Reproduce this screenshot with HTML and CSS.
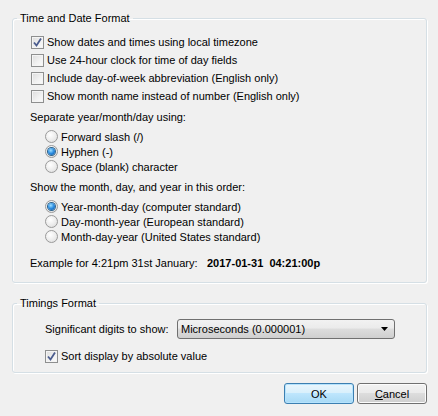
FILE: index.html
```html
<!DOCTYPE html>
<html>
<head>
<meta charset="utf-8">
<link rel="stylesheet" href="styles.css">
</head>
<body>
<div class="dialog">
  <fieldset class="group group-date">
    <legend class="legend">Time and Date Format</legend>
    <div class="checks">
      <div class="check-row"><span class="cb checked"><svg viewBox="0 0 11 11" width="11" height="11"><path d="M2 5.5 L4.5 8.5 L9 1.5" fill="none" stroke="#4b5c8e" stroke-width="1.8"/></svg></span><span class="lbl">Show dates and times using local timezone</span></div>
      <div class="check-row"><span class="cb"></span><span class="lbl">Use 24-hour clock for time of day fields</span></div>
      <div class="check-row"><span class="cb"></span><span class="lbl">Include day-of-week abbreviation (English only)</span></div>
      <div class="check-row"><span class="cb"></span><span class="lbl">Show month name instead of number (English only)</span></div>
    </div>
    <div class="caption cap-sep">Separate year/month/day using:</div>
    <div class="radios">
      <div class="radio-row"><span class="rb"></span><span class="lbl">Forward slash (/)</span></div>
      <div class="radio-row"><span class="rb on"></span><span class="lbl">Hyphen (-)</span></div>
      <div class="radio-row"><span class="rb"></span><span class="lbl">Space (blank) character</span></div>
    </div>
    <div class="caption cap-order">Show the month, day, and year in this order:</div>
    <div class="radios">
      <div class="radio-row"><span class="rb on"></span><span class="lbl">Year-month-day (computer standard)</span></div>
      <div class="radio-row"><span class="rb"></span><span class="lbl">Day-month-year (European standard)</span></div>
      <div class="radio-row"><span class="rb"></span><span class="lbl">Month-day-year (United States standard)</span></div>
    </div>
    <div class="example"><span class="ex-label">Example for 4:21pm 31st January:</span><span class="ex-value">2017-01-31&nbsp; 04:21:00p</span></div>
  </fieldset>

  <fieldset class="group group-timing">
    <legend class="legend">Timings Format</legend>
    <div class="digits-row">
      <span class="digits-label">Significant digits to show:</span>
      <div class="select"><span class="select-text">Microseconds (0.000001)</span><svg class="arrow" width="7" height="4" viewBox="0 0 7 4"><path d="M0 0 H7 L3.5 4 Z" fill="#000"/></svg></div>
    </div>
    <div class="check-row sort-row"><span class="cb checked"><svg viewBox="0 0 11 11" width="11" height="11"><path d="M2 5.5 L4.5 8.5 L9 1.5" fill="none" stroke="#4b5c8e" stroke-width="1.8"/></svg></span><span class="lbl">Sort display by absolute value</span></div>
  </fieldset>

  <div class="buttons">
    <button class="btn btn-ok">OK</button>
    <button class="btn btn-cancel"><u>C</u>ancel</button>
  </div>
</div>
</body>
</html>
```

FILE: styles.css
```css
* { box-sizing: border-box; }
html, body {
  margin: 0;
  padding: 0;
  background: #f0f0f0;
  width: 438px;
  height: 416px;
  overflow: hidden;
}
body {
  font-family: "Liberation Sans", Arial, sans-serif;
  font-size: 11px;
  color: #000;
}
.dialog {
  padding: 11px 11px 0 12px;
}
.group {
  margin: 0;
  padding: 0;
  width: 415px;
  border: 1px solid #d5dfe5;
  border-radius: 3px;
  box-shadow: inset 1px 1px 0 #fff, 1px 1px 0 #fff;
  min-width: 0;
}
.legend {
  margin-left: 4px;
  padding: 0 3px;
  height: 14px;
  line-height: 14px;
}
.group-date {
  padding: 0 0 12px 0;
}
.checks {
  padding-top: 8px;
  padding-left: 18px;
}
.check-row {
  display: flex;
  align-items: center;
  height: 18px;
}
.cb {
  width: 13px;
  height: 13px;
  border: 1px solid #8e8f8f;
  background: linear-gradient(135deg, #dcdcdc 0%, #f2f2f2 60%, #fbfbfb 100%);
  box-shadow: inset 0 0 0 1px #f4f4f4;
  display: flex;
  align-items: center;
  justify-content: center;
  flex: none;
  margin-right: 3px;
}
.cb svg { display: block; }
.caption {
  height: 14px;
  line-height: 14px;
  padding-left: 17px;
}
.cap-sep { margin-top: 5px; }
.cap-order { margin-top: 6px; }
.radios {
  padding-left: 32px;
  margin-top: 5px;
}
.radio-row {
  display: flex;
  align-items: center;
  height: 15px;
}
.rb {
  width: 13px;
  height: 13px;
  border-radius: 50%;
  border: 1px solid #9a9a9a;
  background: radial-gradient(circle at 40% 35%, #ffffff 0%, #ececec 55%, #d6d6d6 100%);
  flex: none;
  margin-right: 3px;
  display: flex;
  align-items: center;
  justify-content: center;
}
.rb.on::after {
  content: "";
  width: 7px;
  height: 7px;
  border-radius: 50%;
  background: radial-gradient(circle at 40% 35%, #9fe0ff 0%, #2a8be0 50%, #0b4f94 100%);
  box-shadow: 0 0 0 1px #2c628b;
}
.example {
  margin-top: 12px;
  padding-left: 17px;
  height: 14px;
  line-height: 14px;
  display: flex;
}
.ex-label { width: 177px; }
.ex-value { font-weight: bold; }

.group-timing {
  margin-top: 13px;
  padding: 0 0 7px 0;
}
.digits-row {
  margin-top: 9px;
  display: flex;
  align-items: center;
  padding-left: 32px;
}
.digits-label { width: 132px; }
.select {
  width: 218px;
  height: 20px;
  border: 1px solid #707070;
  border-radius: 3px;
  background: linear-gradient(#f2f2f2 0%, #ebebeb 45%, #dddddd 50%, #cfcfcf 100%);
  display: flex;
  align-items: center;
  justify-content: space-between;
  padding: 0 3px 0 3px;
}
.arrow { margin-right: 3px; display: block; }
.sort-row {
  margin-top: 8px;
  padding-left: 32px;
}
.buttons {
  display: flex;
  justify-content: flex-end;
  gap: 3px;
  margin-top: 10px;
}
.btn {
  width: 70px;
  height: 21px;
  font-family: inherit;
  font-size: 11px;
  color: #000;
  border-radius: 3px;
  padding: 0;
  margin: 0;
}
.btn-ok {
  border: 1px solid #3c7fb1;
  background: linear-gradient(#eaf6fd 0%, #d9f0fc 45%, #bee6fd 50%, #a7d9f5 100%);
  box-shadow: inset 0 0 0 1px #b6e3fd;
}
.btn-cancel {
  border: 1px solid #707070;
  background: linear-gradient(#f2f2f2 0%, #ebebeb 45%, #dddddd 50%, #cfcfcf 100%);
  box-shadow: inset 0 0 0 1px #fcfcfc;
}
```
